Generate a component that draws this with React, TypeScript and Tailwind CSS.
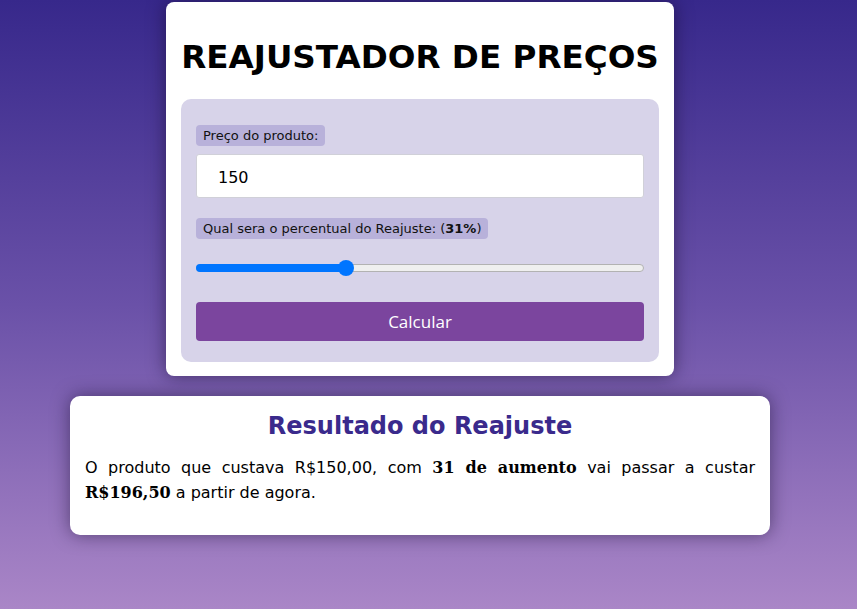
import React from "react";

export default function App() {
  return (
    <div
      className="min-h-[609px] w-full"
      style={{ background: "linear-gradient(to bottom, #37288b 0%, #6a51a8 50%, #aa86c7 100%)" }}
    >
      <div className="w-[840px] flex flex-col items-center pt-[2px]">
        <div className="w-[508px] bg-white rounded-[8px] px-[15px] pt-[15px] pb-[14px] shadow-[0_0_18px_rgba(20,10,40,0.55)]">
          <h1 className="text-center text-[32.6px] font-bold leading-[37px] mt-[22px] mb-[23px] text-black" style={{ fontFamily: '"DejaVu Sans", Verdana, sans-serif' }}>
            REAJUSTADOR DE PREÇOS
          </h1>
          <div className="bg-[#d7d3e9] rounded-[10px] px-[15px] pt-[26px] pb-[21px]" style={{ fontFamily: '"DejaVu Sans", Verdana, sans-serif' }}>
            <div className="flex">
              <span className="bg-[#b8b1da] rounded-[4px] px-[7px] h-[21px] flex items-center text-[13px] text-[#111]">
                Preço do produto:
              </span>
            </div>
            <div className="mt-[8px] h-[44px] bg-white border border-[#d0d0d8] rounded-[3px] flex items-center pl-[21px] pt-[3px] text-[16px] text-black">
              150
            </div>
            <div className="flex mt-[20px]">
              <span className="bg-[#b8b1da] rounded-[4px] px-[7px] h-[21px] flex items-center text-[13px] text-[#111]">
                Qual sera o percentual do Reajuste: (<b>31%</b>)
              </span>
            </div>
            <div className="relative mt-[21px] h-[16px]">
              <div className="absolute left-0 right-0 top-[4px] h-[8px] rounded-full bg-[#efefef] border border-[#b2b2b2]" />
              <div className="absolute left-0 top-[4px] h-[8px] rounded-full bg-[#0075ff]" style={{ width: 152 }} />
              <div className="absolute top-0 w-[16px] h-[16px] rounded-full bg-[#0075ff]" style={{ left: 142 }} />
            </div>
            <button
              className="mt-[26px] w-full h-[39px] bg-[#7b459e] rounded-[4px] text-white text-[17px]"
              style={{ fontFamily: '"Open Sans", "Noto Sans", sans-serif' }}
            >
              Calcular
            </button>
          </div>
        </div>

        <div className="mt-[20px] w-[700px] bg-white rounded-[10px] px-[15px] pt-[14px] pb-[30px] shadow-[0_0_18px_rgba(20,10,40,0.5)]" style={{ fontFamily: '"DejaVu Sans", Verdana, sans-serif' }}>
          <h2 className="text-center text-[24px] font-bold leading-[32px] text-[#3a2a8c]">Resultado do Reajuste</h2>
          <p className="mt-[13px] text-[16px] leading-[25px] text-black text-justify">
            O produto que custava R$150,00, com{" "}
            <strong className="font-bold" style={{ fontFamily: '"DejaVu Serif", serif' }}>31 de aumento</strong> vai passar a custar{" "}
            <strong className="font-bold" style={{ fontFamily: '"DejaVu Serif", serif' }}>R$196,50</strong> a partir de agora.
          </p>
        </div>
      </div>
    </div>
  );
}
